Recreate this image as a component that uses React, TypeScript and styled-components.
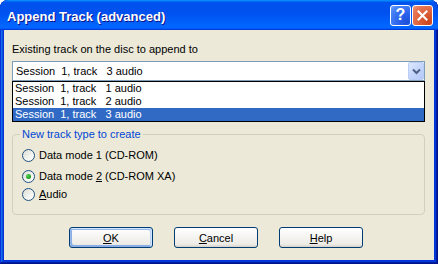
import React from "react";
import styled, { createGlobalStyle } from "styled-components";

const GlobalStyle = createGlobalStyle`
  html, body { margin: 0; padding: 0; background: #ffffff; }
  body { font-family: "Liberation Sans", Arial, sans-serif; }
`;

const Window = styled.div`
  width: 438px;
  height: 264px;
  box-sizing: border-box;
  display: flex;
  flex-direction: column;
  background: #0831d9;
  border-radius: 8px 8px 0 0;
  overflow: hidden;
  box-shadow: inset -1px -1px #00138c, inset 1px 1px #0831d9,
    inset -2px -2px #001ea0, inset 2px 2px #166aee, inset -3px -3px #003bda,
    inset 3px 3px #0855dd;
`;

const TitleBar = styled.div`
  height: 30px;
  flex: none;
  box-sizing: border-box;
  display: flex;
  align-items: center;
  justify-content: space-between;
  padding: 2px 5px 0 7px;
  background: linear-gradient(
    180deg,
    #0997ff,
    #0053ee 8%,
    #0050ee 40%,
    #06f 88%,
    #06f 93%,
    #005bff 95%,
    #003dd7 96%,
    #003dd7
  );
  border-radius: 8px 8px 0 0;
`;

const Title = styled.div`
  color: #ffffff;
  font-family: "Liberation Sans", Arial, sans-serif;
  font-weight: 700;
  font-size: 13px;
  line-height: 15px;
  text-shadow: 1px 1px #0f1089;
  letter-spacing: 0;
`;

const Controls = styled.div`
  display: flex;
  gap: 1px;
  margin-top: -2px;
`;

const CtrlButton = styled.div<{ $variant: "help" | "close" }>`
  width: 21px;
  height: 21px;
  box-sizing: border-box;
  border: 1px solid #ffffff;
  border-radius: 3px;
  display: flex;
  align-items: center;
  justify-content: center;
  background: ${(p) =>
    p.$variant === "close"
      ? "radial-gradient(circle at 85% 85%, #cc4620 0%, #d95a32 35%, #e8795a 80%, #f0a080 100%)"
      : "radial-gradient(circle at 85% 85%, #1d4fd8 0%, #2b64ec 40%, #4a84f5 80%, #7aa8fb 100%)"};
  color: #ffffff;
  font-family: "Liberation Sans", Arial, sans-serif;
  font-weight: 700;
  font-size: 16px;
  line-height: 1;
`;

const Body = styled.div`
  flex: 1;
  margin: 0 4px 4px 4px;
  background: #ece9d8;
  padding: 13px 9px 0 8px;
  box-sizing: border-box;
  display: flex;
  flex-direction: column;
  font-family: "Liberation Sans", Arial, sans-serif;
  font-size: 11px;
  line-height: 13px;
  color: #000000;
`;

const Label = styled.div`
  height: 13px;
  margin-bottom: 5px;
  white-space: pre;
`;

const Combo = styled.div`
  height: 20px;
  box-sizing: border-box;
  border: 1px solid #7f9db9;
  background: #ffffff;
  display: flex;
  align-items: center;
  justify-content: space-between;
  padding-left: 3px;
`;

const ComboText = styled.span`
  white-space: pre;
`;

const DropButton = styled.div`
  width: 16px;
  height: 18px;
  box-sizing: border-box;
  border: 1px solid #b9cdf7;
  border-radius: 2px;
  background: linear-gradient(135deg, #dde8fe 0%, #c5d6fc 50%, #b4c9f6 100%);
  display: flex;
  align-items: center;
  justify-content: center;
`;

const List = styled.div`
  height: 41px;
  box-sizing: border-box;
  border: 1px solid #000000;
  background: #ffffff;
  display: flex;
  flex-direction: column;
`;

const ListItem = styled.div<{ $selected?: boolean }>`
  height: 13px;
  line-height: 13px;
  padding-left: 2px;
  white-space: pre;
  background: ${(p) => (p.$selected ? "#316ac5" : "transparent")};
  color: ${(p) => (p.$selected ? "#ffffff" : "#000000")};
`;

const Group = styled.fieldset`
  margin: 6px 0 0 0;
  padding: 8px 9px 13px 9px;
  border: 1px solid #d0d0bf;
  border-radius: 4px;
  height: 87px;
  box-sizing: border-box;
  min-width: 0;
`;

const Legend = styled.legend`
  color: #0046d5;
  padding: 0 2px;
  margin-left: -2px;
  line-height: 13px;
  font-size: 11px;
`;

const RadioRow = styled.label<{ $gap: number }>`
  display: flex;
  align-items: center;
  height: 13px;
  margin-top: ${(p) => p.$gap}px;
  white-space: pre;
`;

const RadioCircle = styled.span<{ $checked?: boolean }>`
  width: 13px;
  height: 13px;
  box-sizing: border-box;
  border-radius: 50%;
  border: 1px solid #1c5180;
  background: linear-gradient(135deg, #dcdcd5 0%, #f4f4f0 60%, #ffffff 100%);
  margin-right: 4px;
  display: flex;
  align-items: center;
  justify-content: center;
  flex: none;
  &::after {
    content: "";
    display: ${(p) => (p.$checked ? "block" : "none")};
    width: 5px;
    height: 5px;
    border-radius: 50%;
    background: radial-gradient(circle at 35% 35%, #55d655, #21a121 60%, #1a8a1a);
  }
`;

const U = styled.span`
  text-decoration: underline;
  text-underline-offset: 1px;
`;

const ButtonRow = styled.div`
  display: flex;
  gap: 21px;
  margin-top: 12px;
  padding-left: 57px;
`;

const Button = styled.button<{ $default?: boolean }>`
  width: 84px;
  height: 21px;
  box-sizing: border-box;
  padding: 0;
  border: 1px solid #003c74;
  border-radius: 3px;
  background: linear-gradient(180deg, #ffffff, #ecebe6 86%, #d6d0c5);
  font-family: "Liberation Sans", Arial, sans-serif;
  font-size: 11px;
  color: #000000;
  box-shadow: ${(p) =>
    p.$default
      ? "inset -1px 1px #cee7ff, inset 1px 2px #98b8ea, inset -2px 2px #bcd4f6, inset 1px -1px #89ade4, inset 2px -2px #89ade4"
      : "none"};
`;

const Chevron = () => (
  <svg width="9" height="7" viewBox="0 0 9 7">
    <polyline points="1,1.5 4.5,5 8,1.5" fill="none" stroke="#4d6185" strokeWidth="2" />
  </svg>
);

const CloseX = () => (
  <svg width="11" height="11" viewBox="0 0 11 11">
    <path d="M1.5 1.5 L9.5 9.5 M9.5 1.5 L1.5 9.5" stroke="#ffffff" strokeWidth="2" strokeLinecap="square" />
  </svg>
);

export default function App() {
  return (
    <>
      <GlobalStyle />
      <Window>
        <TitleBar>
          <Title>Append Track (advanced)</Title>
          <Controls>
            <CtrlButton $variant="help">?</CtrlButton>
            <CtrlButton $variant="close">
              <CloseX />
            </CtrlButton>
          </Controls>
        </TitleBar>
        <Body>
          <Label>Existing track on the disc to append to</Label>
          <Combo>
            <ComboText>{"Session  1, track   3 audio"}</ComboText>
            <DropButton>
              <Chevron />
            </DropButton>
          </Combo>
          <List>
            <ListItem>{"Session  1, track   1 audio"}</ListItem>
            <ListItem>{"Session  1, track   2 audio"}</ListItem>
            <ListItem $selected>{"Session  1, track   3 audio"}</ListItem>
          </List>
          <Group>
            <Legend>New track type to create</Legend>
            <RadioRow $gap={0}>
              <RadioCircle />
              Data mode 1 (CD-ROM)
            </RadioRow>
            <RadioRow $gap={8}>
              <RadioCircle $checked />
              Data mode <U>2</U> (CD-ROM XA)
            </RadioRow>
            <RadioRow $gap={5}>
              <RadioCircle />
              <U>A</U>udio
            </RadioRow>
          </Group>
          <ButtonRow>
            <Button $default>
              <U>O</U>K
            </Button>
            <Button>
              <U>C</U>ancel
            </Button>
            <Button>
              <U>H</U>elp
            </Button>
          </ButtonRow>
        </Body>
      </Window>
    </>
  );
}
